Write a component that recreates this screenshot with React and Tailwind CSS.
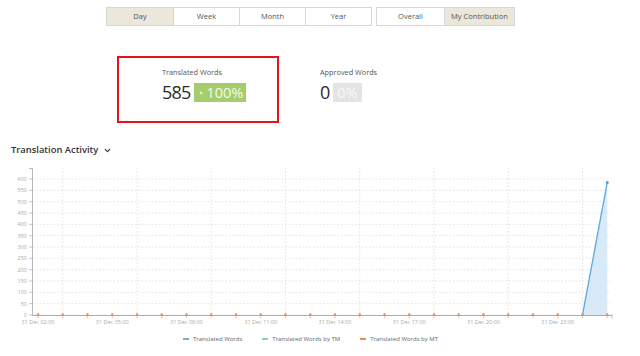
import React from 'react';
import { ChevronDown } from 'lucide-react';

const periods = ['Day', 'Week', 'Month', 'Year'];
const scopes = ['Overall', 'My Contribution'];

const X0 = 38;
const STEP = 24.75;
const Y0 = 155;
const PER = 11.33 / 50;

const xAt = (i) => X0 + i * STEP;
const yAt = (v) => Y0 - v * PER;

const Chart = () => {
  const hours = Array.from({ length: 24 }, (_, i) => i);
  const yVals = Array.from({ length: 13 }, (_, i) => i * 50);
  const labels = ['02:00', '05:00', '08:00', '11:00', '14:00', '17:00', '20:00', '23:00'];
  return (
    <svg width="640" height="172" className="block">
      {/* horizontal grid */}
      {yVals.slice(1).map((v) => (
        <line key={v} x1="33" x2="611" y1={yAt(v)} y2={yAt(v)} stroke="#dcdcdc" strokeWidth="0.8" strokeDasharray="1.5 2" />
      ))}
      {/* vertical grid */}
      {hours.filter((i) => i % 3 === 1).map((i) => (
        <line key={i} x1={xAt(i)} x2={xAt(i)} y1="8" y2={Y0} stroke="#dcdcdc" strokeWidth="0.8" strokeDasharray="1.5 2" />
      ))}
      {/* y axis */}
      <line x1="32.5" x2="32.5" y1="8" y2={Y0 + 0.5} stroke="#b8b8b8" strokeWidth="1" />
      <line x1="29" x2="32.5" y1="8.5" y2="8.5" stroke="#b8b8b8" strokeWidth="1" />
      {yVals.map((v) => (
        <g key={v}>
          <line x1="29" x2="33" y1={yAt(v)} y2={yAt(v)} stroke="#b8b8b8" strokeWidth="0.8" />
          <text x="27" y={yAt(v) + 2} textAnchor="end" fontSize="5.5" fill="#aaa" fontFamily="Open Sans, sans-serif">{v}</text>
        </g>
      ))}
      {/* x axis */}
      <line x1="32.5" x2="612" y1={Y0 + 0.5} y2={Y0 + 0.5} stroke="#c4a58c" strokeWidth="1.2" />
      <line x1="612" x2="612" y1={Y0 - 1} y2={Y0 + 4} stroke="#b8b8b8" strokeWidth="0.8" />
      {hours.map((i) => (
        <line key={i} x1={xAt(i)} x2={xAt(i)} y1={Y0} y2={Y0 + 3} stroke="#b8b8b8" strokeWidth="0.8" />
      ))}
      {labels.map((l, k) => (
        <text key={l} x={xAt(k * 3)} y={Y0 + 9} textAnchor="middle" fontSize="5.5" fill="#aaa" fontFamily="Open Sans, sans-serif">31 Dec {l}</text>
      ))}
      {/* area + line */}
      <polygon points={`${xAt(22)},${Y0} ${xAt(23)},${yAt(585)} ${xAt(23)},${Y0}`} fill="#d8e9f7" />
      <line x1={xAt(22)} y1={Y0} x2={xAt(23)} y2={yAt(585)} stroke="#5aa8e4" strokeWidth="1.3" />
      {hours.map((i) => (
        <circle key={i} cx={xAt(i)} cy={Y0 - 0.5} r="1.2" fill="#f08a4b" />
      ))}
      <rect x={xAt(23) - 1.3} y={yAt(585) - 1.3} width="2.6" height="2.6" fill="#4a9de0" />
    </svg>
  );
};

const LegendItem = ({ color, label }) => (
  <div className="flex items-center gap-[4px]">
    <span className={`w-[6px] h-[2px] ${color}`} />
    <span>{label}</span>
  </div>
);

export default function App() {
  return (
    <div className="w-[640px] h-[356px] bg-white overflow-hidden" style={{ fontFamily: '"Open Sans", sans-serif' }}>
      {/* period / scope toggles */}
      <div className="flex pt-[7px] pl-[106px] text-[7.5px] text-[#555]">
        <div className="flex border border-[#d6d6d6]">
          {periods.map((p, i) => (
            <div
              key={p}
              className={`w-[66px] h-[17px] flex items-center justify-center ${i > 0 ? 'border-l border-[#d6d6d6]' : ''} ${p === 'Day' ? 'bg-[#ebe7da]' : 'bg-white'}`}
            >
              {p}
            </div>
          ))}
        </div>
        <div className="flex border border-[#d6d6d6] ml-[4px]">
          {scopes.map((p, i) => (
            <div
              key={p}
              className={`h-[17px] flex items-center justify-center ${i > 0 ? 'w-[70px] border-l border-[#d6d6d6] bg-[#ebe7da]' : 'w-[67px] bg-white'}`}
            >
              {p}
            </div>
          ))}
        </div>
      </div>

      {/* stats */}
      <div className="flex mt-[30px] ml-[117px]">
        <div className="w-[162px] h-[67px] border-2 border-[#e4141b] pl-[43px] pt-[9px]">
          <div className="text-[7.3px] text-[#555] leading-[10px]">Translated Words</div>
          <div className="flex items-center mt-[5px]">
            <span className="text-[18px] leading-[20px] text-[#2a2a2a] tracking-[-0.8px]">585</span>
            <span className="ml-[4px] h-[19px] pl-[4px] pr-[3px] bg-[#a5cd6e] text-[#f4faea] text-[14.5px] leading-[19px] flex items-center">
              <span className="text-[5px] mr-[3px]">▲</span>100%
            </span>
          </div>
        </div>
        <div className="ml-[41px] pt-[11px]">
          <div className="text-[7.3px] text-[#555] leading-[10px]">Approved Words</div>
          <div className="flex items-center mt-[5px]">
            <span className="text-[18px] leading-[20px] text-[#2a2a2a]">0</span>
            <span className="ml-[3px] h-[19px] px-[4px] bg-[#e4e4e4] text-[#f8f8f8] text-[14.5px] leading-[19px]">0%</span>
          </div>
        </div>
      </div>

      {/* heading */}
      <div className="flex items-center gap-[5px] mt-[20px] ml-[11px] text-[9.4px] font-semibold text-[#333] leading-[14px]">
        Translation Activity
        <ChevronDown size={9} strokeWidth={3} />
      </div>

      <div className="mt-[3px]">
        <Chart />
      </div>

      <div className="flex gap-[20px] mt-[3px] ml-[183px] text-[6px] text-[#666] leading-[8px]">
        <LegendItem color="bg-[#6ab3ea]" label="Translated Words" />
        <LegendItem color="bg-[#8fd3a6]" label="Translated Words by TM" />
        <LegendItem color="bg-[#f3894d]" label="Translated Words by MT" />
      </div>
    </div>
  );
}
